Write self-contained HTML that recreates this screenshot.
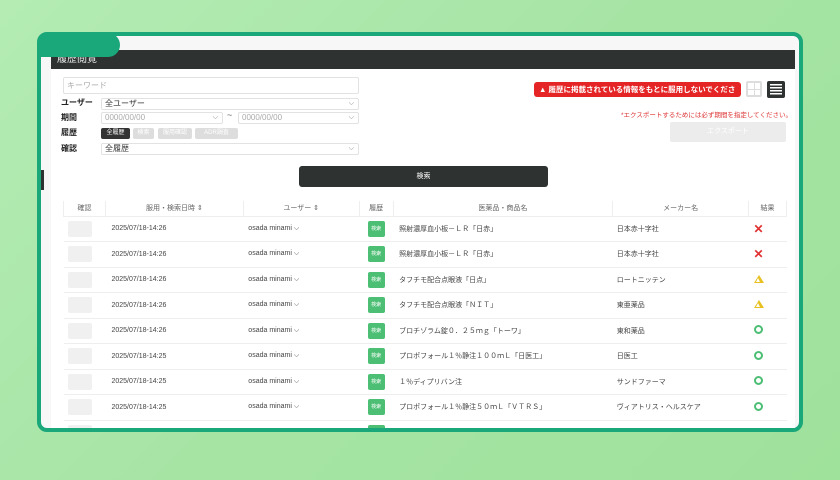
<!DOCTYPE html>
<html><head><meta charset="utf-8"><style>
*{box-sizing:border-box;margin:0;padding:0}
body{width:840px;height:480px;overflow:hidden;background:linear-gradient(135deg,#b4ecb4 0%,#a6e4a4 50%,#9fe29c 100%);font-family:"Liberation Sans","Noto Sans CJK JP",sans-serif;position:relative}
.frame{position:absolute;left:37px;top:32px;width:766px;height:400px;border:4px solid #1aa77a;border-radius:10px;background:#f7f7f7;overflow:hidden}
.tab{position:absolute;left:38px;top:33px;width:82px;height:24px;background:#1aa77a;border-radius:8px 12px 12px 0;z-index:5}
.panel{position:absolute;left:10px;top:14px;width:744px;height:390px;background:#fff}
.hdr{position:absolute;left:0;top:0;width:744px;height:19px;background:#2e3331;color:#eee;font-size:10px;line-height:19px;padding-left:6px}
.abs{position:absolute}
.inp{position:absolute;border:1px solid #e2e2e2;border-radius:2px;background:#fff;font-size:8px;color:#333;padding-left:3px}
.lbl{position:absolute;font-size:8px;font-weight:bold;color:#222}
.chev{position:absolute;right:4px;top:0;color:#777;font-size:7px}
.pill{position:absolute;height:11px;border-radius:2px;font-size:6px;color:#fff;text-align:center;line-height:11px;background:#ddd}
table{position:absolute;left:12px;top:151px;width:724px;border-collapse:collapse;font-size:7px;color:#444}
td,th{height:25.5px;border-bottom:1px solid #eee;vertical-align:middle}
th{height:15px;font-weight:normal;color:#666;border-left:1px solid #eee;text-align:center}
.b{display:block;width:24px;height:16px;background:#f0f0f0;border-radius:2px;margin-left:4px}
.k{display:inline-block;width:17px;height:16px;background:#4cbf74;color:#fff;font-size:5px;line-height:16px;text-align:center;border-radius:2px}
.x{color:#e03030;font-size:12px;font-weight:bold}
.t{display:inline-block;width:0;height:0;border-left:5px solid transparent;border-right:5px solid transparent;border-bottom:8px solid #e8c020;position:relative}
.t::after{content:"";position:absolute;left:-2.5px;top:3px;border-left:2.5px solid transparent;border-right:2.5px solid transparent;border-bottom:4px solid #fff}
.o{display:inline-block;width:9px;height:9px;border:2px solid #4cbf74;border-radius:50%}
.r{padding-left:5px}
</style></head><body>
<div class="frame">
<div class="panel">
<div class="hdr">履歴閲覧</div>
<div class="inp" style="left:12px;top:27px;width:296px;height:17px;line-height:15px;color:#aaa">キーワード</div>
<div class="lbl" style="left:10px;top:47px">ユーザー</div>
<div class="inp" style="left:50px;top:48px;width:258px;height:12px;line-height:10px">全ユーザー<span class="chev">⌵</span></div>
<div class="lbl" style="left:10px;top:62px">期間</div>
<div class="inp" style="left:50px;top:62px;width:122px;height:12px;line-height:10px;color:#aaa">0000/00/00<span class="chev">⌵</span></div>
<div class="abs" style="left:176px;top:60px;font-size:9px;color:#666">~</div>
<div class="inp" style="left:187px;top:62px;width:121px;height:12px;line-height:10px;color:#aaa">0000/00/00<span class="chev">⌵</span></div>
<div class="lbl" style="left:10px;top:77px">履歴</div>
<div class="pill" style="left:50px;top:78px;width:29px;background:#333">全履歴</div>
<div class="pill" style="left:82px;top:78px;width:21px">検索</div>
<div class="pill" style="left:107px;top:78px;width:34px">服用確認</div>
<div class="pill" style="left:144px;top:78px;width:43px">ADR調査</div>
<div class="lbl" style="left:10px;top:93px">確認</div>
<div class="inp" style="left:50px;top:93px;width:258px;height:12px;line-height:10px">全履歴<span class="chev">⌵</span></div>
<div class="abs" style="left:248px;top:116px;width:249px;height:21px;background:#2e3331;border-radius:3px;color:#fff;font-size:7px;text-align:center;line-height:21px">検索</div>
<div class="abs" style="left:483px;top:32px;width:207px;height:15px;background:#e52525;border-radius:3px;color:#fff;font-size:7.5px;font-weight:bold;line-height:15px;padding-left:5px">▲ 履歴に掲載されている情報をもとに服用しないでください</div>
<div class="abs" style="left:695px;top:31px;width:16px;height:16px;border:2px solid #ddd;border-radius:2px;background:linear-gradient(#ddd,#ddd) 50% 0/1px 100% no-repeat,linear-gradient(#ddd,#ddd) 0 50%/100% 1px no-repeat"></div>
<div class="abs" style="left:716px;top:31px;width:18px;height:17px;background:#2e3331;border-radius:2px;padding:3px 3px"><div style="height:11px;background:repeating-linear-gradient(#fff 0 1.5px,#2e3331 1.5px 3px)"></div></div>
<div class="abs" style="left:570px;top:59px;font-size:6.5px;color:#d33">*エクスポートするためには必ず期間を指定してください。</div>
<div class="abs" style="left:619px;top:72px;width:116px;height:20px;background:#ececec;border-radius:2px;color:#fff;font-size:7px;text-align:center;line-height:20px">エクスポート</div>
<table>
<tr><th style="width:42px">確認</th><th style="width:138px">服用・検索日時 ⇕</th><th style="width:116px">ユーザー ⇕</th><th style="width:34px">履歴</th><th style="width:220px">医薬品・商品名</th><th style="width:136px">メーカー名</th><th style="width:38px;border-right:1px solid #eee">結果</th></tr>
<tr><td><span class="b"></span></td><td style="padding-left:6px">2025/07/18-14:26</td><td style="padding-left:5px">osada minami ⌵</td><td style="text-align:center"><span class="k">検索</span></td><td style="padding-left:6px">照射濃厚血小板－ＬＲ「日赤」</td><td style="padding-left:4px">日本赤十字社</td><td class="r"><span class="x">✕</span></td></tr>
<tr><td><span class="b"></span></td><td style="padding-left:6px">2025/07/18-14:26</td><td style="padding-left:5px">osada minami ⌵</td><td style="text-align:center"><span class="k">検索</span></td><td style="padding-left:6px">照射濃厚血小板－ＬＲ「日赤」</td><td style="padding-left:4px">日本赤十字社</td><td class="r"><span class="x">✕</span></td></tr>
<tr><td><span class="b"></span></td><td style="padding-left:6px">2025/07/18-14:26</td><td style="padding-left:5px">osada minami ⌵</td><td style="text-align:center"><span class="k">検索</span></td><td style="padding-left:6px">タフチモ配合点眼液「日点」</td><td style="padding-left:4px">ロートニッテン</td><td class="r"><span class="t"></span></td></tr>
<tr><td><span class="b"></span></td><td style="padding-left:6px">2025/07/18-14:26</td><td style="padding-left:5px">osada minami ⌵</td><td style="text-align:center"><span class="k">検索</span></td><td style="padding-left:6px">タフチモ配合点眼液「ＮＩＴ」</td><td style="padding-left:4px">東亜薬品</td><td class="r"><span class="t"></span></td></tr>
<tr><td><span class="b"></span></td><td style="padding-left:6px">2025/07/18-14:26</td><td style="padding-left:5px">osada minami ⌵</td><td style="text-align:center"><span class="k">検索</span></td><td style="padding-left:6px">ブロチゾラム錠０．２５ｍｇ「トーワ」</td><td style="padding-left:4px">東和薬品</td><td class="r"><span class="o"></span></td></tr>
<tr><td><span class="b"></span></td><td style="padding-left:6px">2025/07/18-14:25</td><td style="padding-left:5px">osada minami ⌵</td><td style="text-align:center"><span class="k">検索</span></td><td style="padding-left:6px">プロポフォール１％静注１００ｍＬ「日医工」</td><td style="padding-left:4px">日医工</td><td class="r"><span class="o"></span></td></tr>
<tr><td><span class="b"></span></td><td style="padding-left:6px">2025/07/18-14:25</td><td style="padding-left:5px">osada minami ⌵</td><td style="text-align:center"><span class="k">検索</span></td><td style="padding-left:6px">１％ディプリバン注</td><td style="padding-left:4px">サンドファーマ</td><td class="r"><span class="o"></span></td></tr>
<tr><td><span class="b"></span></td><td style="padding-left:6px">2025/07/18-14:25</td><td style="padding-left:5px">osada minami ⌵</td><td style="text-align:center"><span class="k">検索</span></td><td style="padding-left:6px">プロポフォール１％静注５０ｍＬ「ＶＴＲＳ」</td><td style="padding-left:4px">ヴィアトリス・ヘルスケア</td><td class="r"><span class="o"></span></td></tr>
<tr><td><span class="b"></span></td><td></td><td></td><td style="text-align:center"><span class="k">検索</span></td><td></td><td></td><td></td></tr>
</table>
</div>
<div class="abs" style="left:0;top:134px;width:3px;height:20px;background:#2e3331"></div>
</div>
<div class="tab"></div>
</body></html>
